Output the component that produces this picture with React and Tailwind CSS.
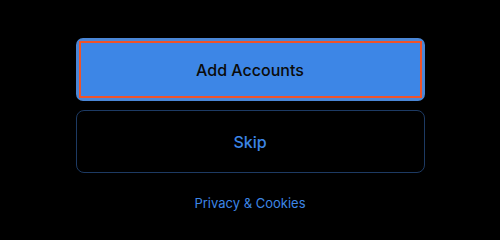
export default function App() {
  return (
    <div className="w-[500px] h-[240px] bg-black flex flex-col items-center pt-[38px] font-['Inter',sans-serif]">
      <button className="w-[349px] h-[63px] rounded-[7px] bg-[#3d86e6] border-[3px] border-[#4a86d6] p-0">
        <span className="flex h-full w-full items-center justify-center border-2 border-[#f0532a] text-[16px] font-medium text-[#0b0b0b]">
          Add Accounts
        </span>
      </button>
      <button className="mt-[9px] w-[349px] h-[63px] rounded-[8px] border border-[#1d3a63] text-[16px] font-medium text-[#3d86e6]">
        Skip
      </button>
      <a className="mt-[21px] text-[13px] text-[#3d86e6]">Privacy &amp; Cookies</a>
    </div>
  );
}
